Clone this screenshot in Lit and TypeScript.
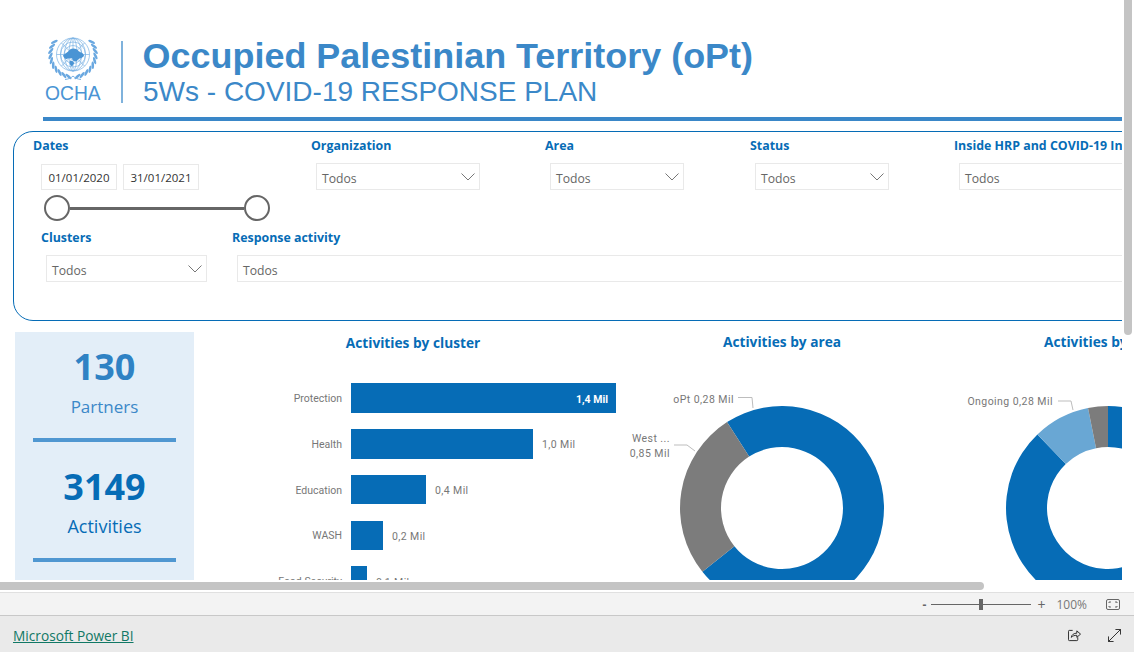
import { LitElement, html, css, svg } from 'lit';
import { customElement } from 'lit/decorators.js';

const BLUE = '#066cb6';
const GREY = '#7c7c7c';
const LIGHT = '#69a7d4';

// ring segment between two clockwise angles, measured from 12 o'clock
function arc(cx: number, cy: number, from: number, to: number, r = 102, ri = 61) {
  const pt = (a: number, rad: number) => {
    const t = (a * Math.PI) / 180;
    return `${(cx + rad * Math.sin(t)).toFixed(2)} ${(cy - rad * Math.cos(t)).toFixed(2)}`;
  };
  const large = to - from > 180 ? 1 : 0;
  return `M${pt(from, r)}A${r} ${r} 0 ${large} 1 ${pt(to, r)}L${pt(to, ri)}A${ri} ${ri} 0 ${large} 0 ${pt(from, ri)}Z`;
}

const bars = [
  { name: 'Protection', value: '1,4 Mil', width: 265, inside: true },
  { name: 'Health', value: '1,0 Mil', width: 182 },
  { name: 'Education', value: '0,4 Mil', width: 75 },
  { name: 'WASH', value: '0,2 Mil', width: 32 },
  { name: 'Food Security', value: '0,1 Mil', width: 16 },
];

// wreath leaves, one side; the other is mirrored
const leaves = Array.from({ length: 10 }, (_, i) => {
  const a = 56 + i * 12.5;
  const t = (a * Math.PI) / 180;
  return { x: 22.5 * Math.sin(t), y: -22.5 * Math.cos(t), r: a + 60 };
});

@customElement('app-root')
export class AppRoot extends LitElement {
  static styles = css`
    :host {
      display: block;
      position: relative;
      width: 1134px;
      height: 652px;
      overflow: hidden;
      background: #fff;
      font-family: 'Open Sans', 'Liberation Sans', sans-serif;
    }

    .report {
      width: 1122px;
      height: 580px;
      overflow: hidden;
    }

    /* header */
    .header {
      display: flex;
      height: 79px;
      padding: 38px 0 0 45px;
    }
    .logo {
      width: 57px;
      display: flex;
      flex-direction: column;
      margin-top: -2px;
    }
    .logo svg {
      display: block;
      margin-left: -1px;
      flex: none;
    }
    .ocha {
      font-family: 'Liberation Sans', sans-serif;
      font-size: 19.3px;
      line-height: 20px;
      color: #4a94d4;
      margin-top: 2px;
    }
    .divider {
      width: 2px;
      height: 62px;
      margin: 3px 20px 0 19px;
      background: #7fb2dc;
    }
    .heading {
      font-family: 'Liberation Sans', sans-serif;
      color: #3b88c8;
    }
    .title {
      font-size: 35.95px;
      line-height: 36px;
      font-weight: 700;
      margin-left: -0.4px;
    }
    .subtitle {
      font-size: 28px;
      line-height: 34px;
      margin-top: 1px;
    }
    .rule {
      height: 4px;
      margin-left: 43px;
      background: #3a87c8;
    }

    /* filters */
    .filters {
      width: 1300px;
      height: 190px;
      box-sizing: border-box;
      margin: 10px 0 0 13px;
      padding-top: 5px;
      border: 1px solid #066cb6;
      border-radius: 20px;
    }
    .filter-row {
      display: flex;
    }
    .filter-row.top {
      height: 92px;
    }
    .slicer {
      flex: none;
    }
    .slicer.dates-slicer {
      width: 278px;
      padding-left: 19px;
      box-sizing: border-box;
    }
    .slicer-title {
      font-size: 12.4px;
      line-height: 18px;
      font-weight: 700;
      color: #066cb6;
      white-space: nowrap;
    }
    .select {
      display: flex;
      align-items: center;
      justify-content: space-between;
      height: 27px;
      box-sizing: border-box;
      margin: 8px 0 0 5px;
      padding: 3px 4px 0 5px;
      border: 1px solid #e9e9e9;
      font-size: 12.2px;
      color: #666;
    }
    .select svg {
      display: block;
      margin-top: -3px;
    }
    .dates {
      display: flex;
      gap: 6px;
      margin: 9px 0 0 8px;
    }
    .date {
      width: 76px;
      height: 26px;
      box-sizing: border-box;
      border: 1px solid #e9e9e9;
      font-size: 11.5px;
      line-height: 25px;
      text-align: center;
      color: #333;
    }
    .slider {
      display: flex;
      align-items: center;
      width: 226px;
      margin: 5px 0 0 11px;
    }
    .knob {
      flex: none;
      width: 26px;
      height: 26px;
      box-sizing: border-box;
      border: 2px solid #666;
      border-radius: 50%;
    }
    .track {
      flex: 1;
      height: 3px;
      background: #666;
    }

    /* lower part */
    .content {
      display: flex;
      margin: 11px 0 0 15px;
      height: 248px;
    }
    .kpis {
      flex: none;
      width: 179px;
      padding: 0 18px;
      box-sizing: border-box;
      background: #e3eef8;
      text-align: center;
    }
    .kpi-number {
      font-size: 36px;
      line-height: 40px;
      font-weight: 700;
      padding-top: 15px;
      color: #2f82c4;
    }
    .kpi-label {
      font-size: 17px;
      line-height: 24px;
      margin-top: 8px;
      color: #3b88c8;
    }
    .kpi-rule {
      height: 4px;
      margin-top: 19px;
      background: #5097d1;
    }
    .kpi.dark .kpi-number {
      padding-top: 25px;
      color: #066cb6;
    }
    .kpi.dark .kpi-label {
      color: #066cb6;
      font-size: 18px;
      margin-top: 7px;
    }
    .kpi.dark .kpi-rule {
      margin-top: 20px;
    }
    .chart {
      flex: none;
    }
    .chart.cluster {
      width: 438px;
    }
    .chart.area {
      width: 300px;
    }
    .chart.status {
      width: 374px;
    }
    .chart-title {
      font-size: 13.7px;
      line-height: 20px;
      font-weight: 700;
      text-align: center;
      color: #066cb6;
    }
    .chart.cluster .chart-title {
      line-height: 22px;
    }
    .chart.status .chart-title {
      text-align: left;
      padding-left: 112px;
    }
    .chart svg {
      display: block;
      overflow: visible;
    }
    .bars {
      display: flex;
      flex-direction: column;
      gap: 16.25px;
      margin-top: 29.3px;
    }
    .bar-row {
      display: flex;
      align-items: center;
      height: 29.5px;
      font-family: Roboto, 'Liberation Sans', sans-serif;
      font-size: 10.5px;
      color: #777;
    }
    .bar-name {
      flex: none;
      width: 148px;
      margin: 1px 9px 0 0;
      text-align: right;
    }
    .bar {
      flex: none;
      height: 29.5px;
      display: flex;
      align-items: center;
      justify-content: flex-end;
      background: #066cb6;
    }
    .bar span {
      margin: 2px 8px 0 0;
      color: #fff;
      font-weight: 700;
    }
    .bar-value {
      margin: 2px 0 0 9px;
      letter-spacing: 0.4px;
    }
    .donut-label {
      font-family: Roboto, 'Liberation Sans', sans-serif;
      font-size: 10.5px;
      letter-spacing: 0.45px;
      fill: #777;
    }
    .leader {
      fill: none;
      stroke: #bdbdbd;
      stroke-width: 1;
    }

    /* browser-side chrome over the report */
    .scroll {
      position: absolute;
      background: #c4c4c4;
      border-radius: 4px;
    }
    .scroll.v {
      left: 1124px;
      top: -6px;
      width: 8px;
      height: 341px;
    }
    .scroll.h {
      left: -6px;
      top: 582px;
      width: 990px;
      height: 8px;
    }
    .zoombar {
      display: flex;
      align-items: center;
      justify-content: flex-end;
      height: 24px;
      margin-top: 12px;
      padding-right: 14px;
      background: #f3f3f3;
      border-top: 1px solid #e0e0e0;
      border-bottom: 1px solid #c8c8c8;
      box-sizing: border-box;
      font-size: 12px;
      color: #666;
    }
    .minus {
      font-weight: 700;
      margin-right: 5px;
    }
    .zoom-track {
      position: relative;
      width: 100px;
      height: 1px;
      background: #666;
    }
    .zoom-thumb {
      position: absolute;
      left: 48px;
      top: -5px;
      width: 4px;
      height: 11px;
      background: #666;
    }
    .plus {
      margin-left: 6px;
      font-size: 14px;
    }
    .percent {
      margin: 0 19px 0 11px;
      color: #777;
    }
    .zoombar svg,
    .footer svg {
      display: block;
    }
    .footer {
      display: flex;
      align-items: center;
      height: 36px;
      box-sizing: border-box;
      padding: 3px 13px 0 13px;
      background: #eaeaea;
    }
    .footer a {
      font-size: 13.7px;
      color: #117865;
      text-decoration: underline;
      margin-right: auto;
    }
    .footer .share {
      margin-right: 27px;
    }
  `;

  private chevron() {
    return html`<svg width="14" height="8" viewBox="0 0 14 8"><path d="M.5.5 7 7 13.500.5" fill="none" stroke="#777"/></svg>`;
  }

  private select(width: number, chevron = true) {
    return html`<div class="select" style="width:${width}px"><span>Todos</span>${chevron ? this.chevron() : ''}</div>`;
  }

  private logo() {
    const meridians = [4, 8.500, 12.500];
    return html`<svg width="58" height="46" viewBox="0 0 58 46">
      <g transform="translate(29 18.500)" fill="none" stroke="#7ab2e4" stroke-width=".7">
        <circle r="16.500"/>
        <circle r="12.500"/>
        <circle r="9"/>
        <circle r="5"/>
        <path d="M-16.500 0H16.500M0-16.500V16.500M-11.700-11.700 11.700 11.700M11.700-11.700-11.700 11.700"/>
        ${meridians.map((m) => svg`<ellipse rx=${m} ry="16.500"/>`)}
        <path fill="#4a94d4" stroke="none" d="M-10 1c3-3 5-3 7-6 3-2 7-1 9 2 2 1 4 1 5 4-1 3-4 2-6 4-1 2-3 3-5 1 0-3-3-3-5-2-2 1-4 0-5-3Z"/>
        <path fill="#4a94d4" stroke="none" d="M-3 6c2 0 4 1 4 3l-2 3c-2-1-3-3-2-6Z"/>
        ${leaves.map(
          (l) => svg`
            <ellipse cx=${l.x} cy=${l.y} rx="1.300" ry="3.700" fill="#6aa8e0" stroke="none" transform="rotate(${l.r} ${l.x} ${l.y})"/>
            <ellipse cx=${-l.x} cy=${l.y} rx="1.300" ry="3.700" fill="#6aa8e0" stroke="none" transform="rotate(${-l.r} ${-l.x} ${l.y})"/>`
        )}
        <path d="M-8 25c4-.5 6-1.500 8-3.500 2 2 4 3 8 3.500" stroke-width="1"/>
      </g>
    </svg>`;
  }

  render() {
    return html`
      <div class="report">
        <div class="header">
          <div class="logo">${this.logo()}<div class="ocha">OCHA</div></div>
          <div class="divider"></div>
          <div class="heading">
            <div class="title">Occupied Palestinian Territory (oPt)</div>
            <div class="subtitle">5Ws - COVID-19 RESPONSE PLAN</div>
          </div>
        </div>
        <div class="rule"></div>

        <div class="filters">
          <div class="filter-row top">
            <div class="slicer dates-slicer">
              <div class="slicer-title">Dates</div>
              <div class="dates"><div class="date">01/01/2020</div><div class="date">31/01/2021</div></div>
              <div class="slider"><div class="knob"></div><div class="track"></div><div class="knob"></div></div>
            </div>
            <div class="slicer" style="width:234px;margin-left:19px"><div class="slicer-title">Organization</div>${this.select(164)}</div>
            <div class="slicer" style="width:205px"><div class="slicer-title">Area</div>${this.select(134)}</div>
            <div class="slicer" style="width:204px"><div class="slicer-title">Status</div>${this.select(134)}</div>
            <div class="slicer" style="width:300px"><div class="slicer-title">Inside HRP and COVID-19 Intervention</div>${this.select(290, false)}</div>
          </div>
          <div class="filter-row">
            <div class="slicer" style="width:191px;margin-left:27px"><div class="slicer-title">Clusters</div>${this.select(161)}</div>
            <div class="slicer"><div class="slicer-title">Response activity</div>${this.select(1000, false)}</div>
          </div>
        </div>

        <div class="content">
          <div class="kpis">
            <div class="kpi">
              <div class="kpi-number">130</div>
              <div class="kpi-label">Partners</div>
              <div class="kpi-rule"></div>
            </div>
            <div class="kpi dark">
              <div class="kpi-number">3149</div>
              <div class="kpi-label">Activities</div>
              <div class="kpi-rule"></div>
            </div>
          </div>

          <div class="chart cluster">
            <div class="chart-title">Activities by cluster</div>
            <div class="bars">
              ${bars.map(
                (b) => html`<div class="bar-row">
                  <div class="bar-name">${b.name}</div>
                  <div class="bar" style="width:${b.width}px">${b.inside ? html`<span>${b.value}</span>` : ''}</div>
                  ${b.inside ? '' : html`<div class="bar-value">${b.value}</div>`}
                </div>`
              )}
            </div>
          </div>

          <div class="chart area">
            <div class="chart-title">Activities by area</div>
            <svg width="300" height="228" viewBox="0 0 300 228">
              <path d=${arc(150, 156, 327.4, 591.3)} fill=${BLUE}/>
              <path d=${arc(150, 156, 231.3, 327.4)} fill=${GREY}/>
              <text class="donut-label" x="102" y="51" text-anchor="end">oPt 0,28 Mil</text>
              <path class="leader" d="M106 45.500H120L121 56"/>
              <text class="donut-label" x="38" y="90" text-anchor="end">West ...</text>
              <text class="donut-label" x="38" y="105" text-anchor="end">0,85 Mil</text>
              <path class="leader" d="M42 93H55L63 99"/>
            </svg>
          </div>

          <div class="chart status">
            <div class="chart-title">Activities by status</div>
            <svg width="374" height="228" viewBox="0 0 374 228">
              <path d=${arc(176, 156, 0, 316.2)} fill=${BLUE}/>
              <path d=${arc(176, 156, 316.2, 348.7)} fill=${LIGHT}/>
              <path d=${arc(176, 156, 348.7, 360)} fill=${GREY}/>
              <text class="donut-label" x="121" y="53" text-anchor="end">Ongoing 0,28 Mil</text>
              <path class="leader" d="M126 49H139L141 58"/>
            </svg>
          </div>
        </div>
      </div>

      <div class="scroll v"></div>
      <div class="scroll h"></div>

      <div class="zoombar">
        <span class="minus">-</span>
        <div class="zoom-track"><div class="zoom-thumb"></div></div>
        <span class="plus">+</span>
        <span class="percent">100%</span>
        <svg width="14" height="11" viewBox="0 0 14 11" fill="none" stroke="#666">
          <rect x=".5" y=".5" width="13" height="10" rx="1.500"/>
          <path d="M3 4V3H5M9 3H11V4M11 7V8H9M5 8H3V7"/>
        </svg>
      </div>
      <div class="footer">
        <a href="#">Microsoft Power BI</a>
        <svg class="share" width="13" height="13" viewBox="0 0 14 14" fill="none" stroke="#222">
          <path d="M5 1.500H1.500a1 1 0 0 0-1 1v9a1 1 0 0 0 1 1h8a1 1 0 0 0 1-1V9"/>
          <path d="M3.500 9c.5-3 3-4.500 6-4.500V2l4 3.500-4 3.500V6.800c-2.500 0-4.500.6-6 2.200Z"/>
        </svg>
        <svg width="13" height="13" viewBox="0 0 14 14" fill="none" stroke="#222">
          <path d="M.5 13.500 13.500.5M8 .5H13.500V6M.5 8V13.500H6"/>
        </svg>
      </div>
    `;
  }
}

declare global {
  interface HTMLElementTagNameMap {
    'app-root': AppRoot;
  }
}
